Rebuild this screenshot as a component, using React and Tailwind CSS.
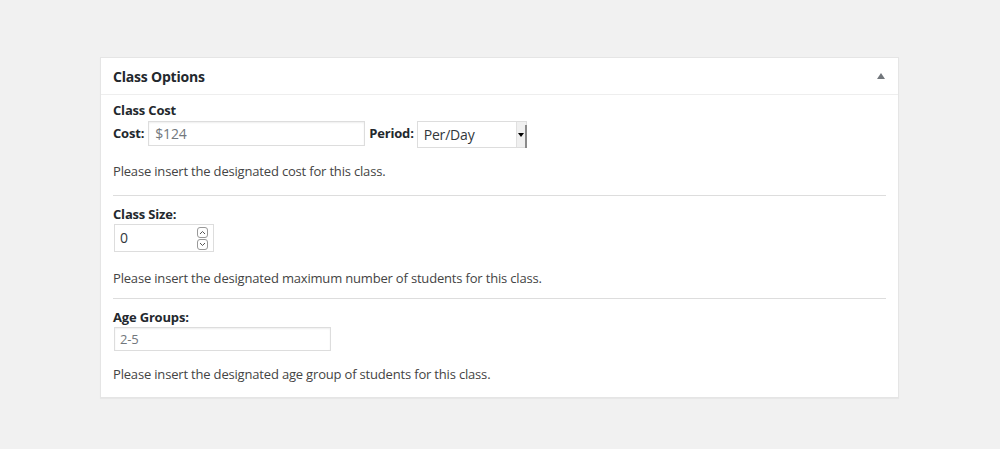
export default function App() {
  const font = { fontFamily: '"Open Sans", "Noto Sans", sans-serif' };
  return (
    <div className="w-[1000px] h-[449px] bg-[#f1f1f1] pt-[57px] pl-[100px]" style={font}>
      <div className="w-[799px] bg-white border border-[#e5e5e5] shadow-[0_1px_1px_rgba(0,0,0,0.04)]">
        <div className="h-[37px] flex items-center justify-between px-[12px] border-b border-[#eeeeee]">
          <span className="text-[14px] font-bold text-[#23282d] tracking-[-0.2px]">Class Options</span>
          <span className="w-0 h-0 border-l-[4px] border-r-[4px] border-b-[6px] border-l-transparent border-r-transparent border-b-[#72777c] mr-[1px]"></span>
        </div>
        <div className="px-[12px] text-[13px] text-[#444] tracking-[-0.18px] leading-[18px]">
          <div className="pt-[6px] pb-[15px] border-b border-[#dddddd]">
            <div className="font-bold text-[#23282d]">Class Cost</div>
            <div className="flex items-start mt-[2px]">
              <span className="font-bold text-[#23282d] mr-[4px] mt-[3px]">Cost:</span>
              <div className="w-[217px] h-[25px] border border-[#dddddd] shadow-[inset_0_1px_2px_rgba(0,0,0,0.07)] flex items-center px-[6px] text-[14px] text-[#72777c]">$124</div>
              <span className="font-bold text-[#23282d] ml-[4px] mr-[3px] mt-[3px]">Period:</span>
              <div className="w-[110px] h-[27px] border border-[#dddddd] flex items-center relative text-[14px] text-[#32373c] pl-[6px]">
                Per/Day
                <div className="absolute right-0 top-0 bottom-0 w-[10px] bg-[#f0f0f0] border-l border-[#e0e0e0] flex items-center justify-center">
                  <span className="w-0 h-0 border-l-[3px] border-r-[3px] border-t-[4px] border-l-transparent border-r-transparent border-t-black"></span>
                </div>
                <div className="absolute right-[-1px] top-[3px] bottom-[-1px] w-[2px] bg-[#8a8a8a]"></div>
              </div>
            </div>
            <div className="mt-[14px]">Please insert the designated cost for this class.</div>
          </div>
          <div className="pt-[9px] pb-[11px] border-b border-[#dddddd]">
            <div className="font-bold text-[#23282d]">Class Size:</div>
            <div className="mt-[1px] ml-[1px] w-[100px] h-[28px] border border-[#dddddd] flex items-center justify-between pl-[5px] pr-[5px] text-[14px] text-[#32373c]">
              <span>0</span>
              <div className="flex flex-col gap-[1px]">
                <div className="w-[11px] h-[11px] border border-[#999] rounded-[3px] flex items-center justify-center">
                  <svg width="7" height="5" viewBox="0 0 7 5"><path d="M1 4 L3.5 1.5 L6 4" stroke="#555" strokeWidth="1" fill="none" /></svg>
                </div>
                <div className="w-[11px] h-[11px] border border-[#999] rounded-[3px] flex items-center justify-center">
                  <svg width="7" height="5" viewBox="0 0 7 5"><path d="M1 1 L3.5 3.5 L6 1" stroke="#555" strokeWidth="1" fill="none" /></svg>
                </div>
              </div>
            </div>
            <div className="mt-[17px]">Please insert the designated maximum number of students for this class.</div>
          </div>
          <div className="pt-[9px] pb-[14px]">
            <div className="font-bold text-[#23282d]">Age Groups:</div>
            <div className="mt-[1px] ml-[1px] w-[217px] h-[24px] border border-[#dddddd] shadow-[inset_0_1px_2px_rgba(0,0,0,0.07)] flex items-center px-[5px] text-[13px] text-[#72777c]">2-5</div>
            <div className="mt-[14px]">Please insert the designated age group of students for this class.</div>
          </div>
        </div>
      </div>
    </div>
  );
}
